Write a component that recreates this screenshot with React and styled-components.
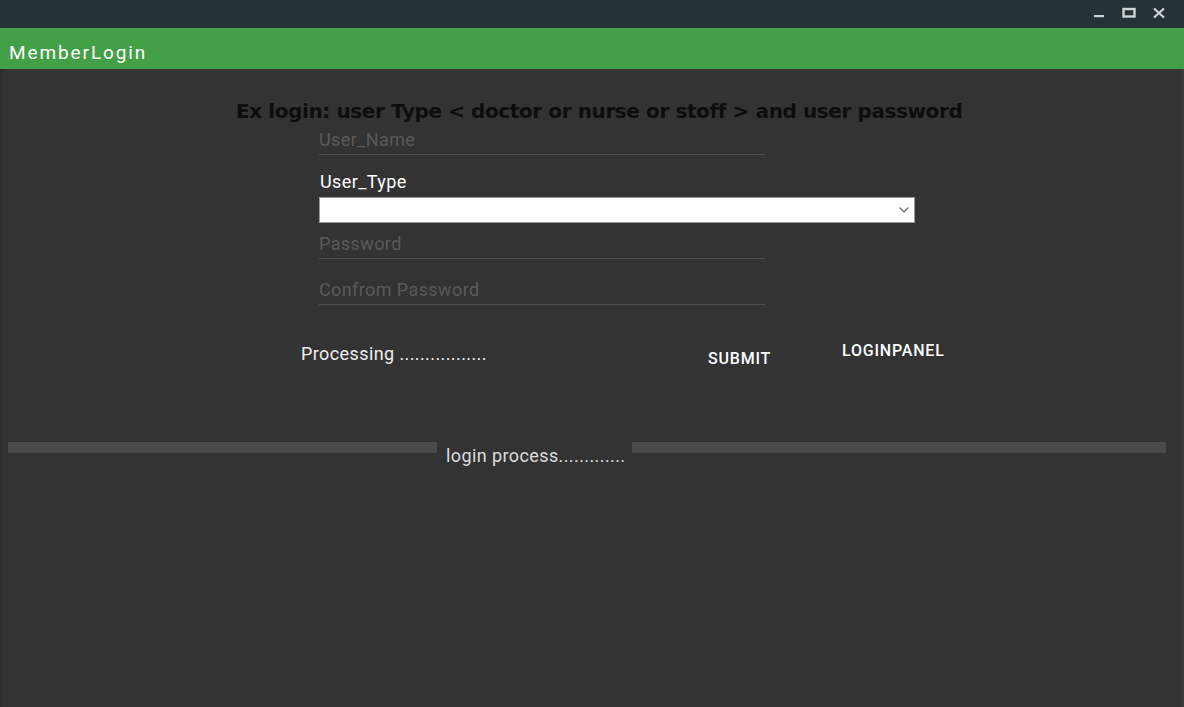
import React from "react";
import styled, { createGlobalStyle } from "styled-components";

const Global = createGlobalStyle`
  html, body { margin: 0; padding: 0; background: #333333; }
  body { font-family: Roboto, "Liberation Sans", sans-serif; }
  * { box-sizing: border-box; }
`;

const Window = styled.div`
  width: 1184px;
  height: 707px;
  display: flex;
  flex-direction: column;
  background: #333333;
  overflow: hidden;
`;

const TitleBar = styled.div`
  height: 28px;
  background: #263238;
  display: flex;
  justify-content: flex-end;
  align-items: flex-start;
  gap: 16px;
  padding: 7px 18px 0 0;
`;

const WinBtn = styled.svg`
  width: 14px;
  height: 14px;
  display: block;
`;

const Header = styled.div`
  height: 41px;
  background: #43a047;
  color: #ffffff;
  font-size: 19px;
  letter-spacing: 1.9px;
  display: flex;
  align-items: center;
  padding-left: 9px;
  padding-top: 7px;
`;

const Body = styled.div`
  flex: 1;
  background: #333333;
  border-left: 3px solid #2e2e2e;
  border-right: 3px solid #3a3a3a;
  display: flex;
  flex-direction: column;
  padding-top: 29px;
`;

const Heading = styled.h1`
  margin: 0 0 0 233px;
  font-family: "DejaVu Sans", sans-serif;
  font-weight: bold;
  font-size: 20px;
  letter-spacing: -0.4px;
  line-height: 26px;
  color: #0d0d0d;
`;

const Form = styled.div`
  margin-left: 316px;
  width: 596px;
  display: flex;
  flex-direction: column;
`;

const Field = styled.div`
  width: 446px;
  height: ${p => p.$h}px;
  border-bottom: 1px solid #4f4f4f;
  color: #5a5a5a;
  font-size: 18px;
  letter-spacing: 0.4px;
  line-height: 20px;
  display: flex;
  align-items: flex-end;
  padding-bottom: 4px;
  margin-top: ${p => p.$mt}px;
`;

const Label = styled.div`
  color: #ffffff;
  font-size: 18px;
  letter-spacing: 0.4px;
  line-height: 20px;
  margin-top: 17px;
  padding-left: 1px;
`;

const Select = styled.div`
  margin-top: 5px;
  height: 26px;
  background: #ffffff;
  border: 1px solid #9a9a9a;
  display: flex;
  justify-content: flex-end;
  align-items: center;
  padding-right: 4px;
`;

const ActionRow = styled.div`
  display: flex;
  align-items: flex-start;
  margin-top: 39px;
  padding-left: 298px;
`;

const Status = styled.div`
  color: #eeeeee;
  font-size: 18px;
  letter-spacing: 0.4px;
  line-height: 20px;
  width: 407px;
`;

const TextButton = styled.div`
  color: #ffffff;
  font-size: 16px;
  font-weight: 500;
  letter-spacing: 0.8px;
  line-height: 18px;
  margin-top: ${p => p.$mt}px;
  width: ${p => p.$w}px;
`;

const ProgressRow = styled.div`
  display: flex;
  align-items: flex-start;
  margin-top: 74px;
  padding-left: 5px;
  padding-right: 15px;
`;

const Bar = styled.div`
  height: 11px;
  background: #4a4a4a;
  width: ${p => (p.$w ? `${p.$w}px` : "auto")};
  flex: ${p => (p.$w ? "none" : "1")};
`;

const ProgressText = styled.div`
  color: #dddddd;
  font-size: 18px;
  letter-spacing: 0.4px;
  line-height: 20px;
  margin: 4px 7px 0 9px;
`;

export default function App() {
  return (
    <>
      <Global />
      <Window>
        <TitleBar>
          <WinBtn viewBox="0 0 14 14">
            <rect x="2" y="8" width="10" height="2.2" fill="#cfd4d6" />
          </WinBtn>
          <WinBtn viewBox="0 0 14 14">
            <rect x="1.5" y="2" width="11" height="7.5" fill="none" stroke="#cfd4d6" strokeWidth="2.4" />
          </WinBtn>
          <WinBtn viewBox="0 0 14 14">
            <path d="M2 1.5 L12 10.5 M12 1.5 L2 10.5" stroke="#cfd4d6" strokeWidth="2.2" />
          </WinBtn>
        </TitleBar>
        <Header>MemberLogin</Header>
        <Body>
          <Heading>Ex login: user Type &lt; doctor or nurse or stoff &gt; and user password</Heading>
          <Form>
            <Field $h={32} $mt={-1}>User_Name</Field>
            <Label>User_Type</Label>
            <Select>
              <svg width="12" height="8" viewBox="0 0 12 8">
                <path d="M1.5 1.5 L6 6 L10.5 1.5" fill="none" stroke="#666" strokeWidth="1.2" />
              </svg>
            </Select>
            <Field $h={36} $mt={0}>Password</Field>
            <Field $h={46} $mt={0}>Confrom Password</Field>
          </Form>
          <ActionRow>
            <Status>Processing .................</Status>
            <TextButton $mt={6} $w={134}>SUBMIT</TextButton>
            <TextButton $mt={-2} $w={120}>LOGINPANEL</TextButton>
          </ActionRow>
          <ProgressRow>
            <Bar $w={429} />
            <ProgressText>login process.............</ProgressText>
            <Bar />
          </ProgressRow>
        </Body>
      </Window>
    </>
  );
}
